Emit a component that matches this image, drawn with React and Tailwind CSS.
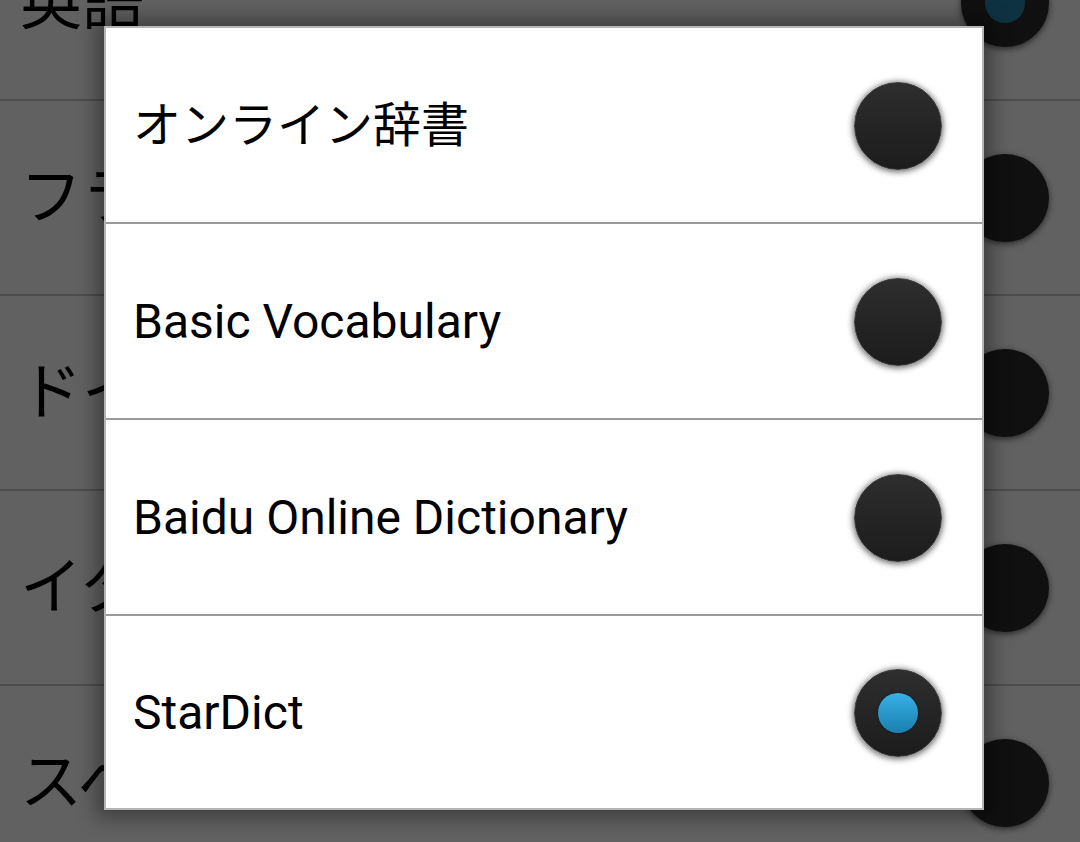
const languages = [
  { name: "英語", selected: true },
  { name: "フランス語" },
  { name: "ドイツ語" },
  { name: "イタリア語" },
  { name: "スペイン語" },
];

const dictionaries = [
  { name: "オンライン辞書" },
  { name: "Basic Vocabulary" },
  { name: "Baidu Online Dictionary" },
  { name: "StarDict", selected: true },
];

function Radio({ checked, dim }) {
  return (
    <div
      className={
        dim
          ? "w-[88px] h-[88px] rounded-full bg-[#101010] shadow-[0_2px_6px_rgba(0,0,0,0.6)] flex items-center justify-center"
          : "w-[88px] h-[88px] rounded-full bg-gradient-to-b from-[#2e2e2e] to-[#1c1c1c] border border-[#3c3c3c] shadow-[0_1px_6px_1px_rgba(0,0,0,0.6)] flex items-center justify-center"
      }
    >
      {checked && (
        <div
          className={
            dim
              ? "w-[40px] h-[40px] rounded-full bg-[#0f3242]"
              : "w-[40px] h-[40px] rounded-full bg-gradient-to-b from-[#38b1e6] to-[#1a7fb0] shadow-[0_0_2px_rgba(0,0,0,0.8)]"
          }
        />
      )}
    </div>
  );
}

export default function App() {
  return (
    <div className="relative w-[1080px] h-[842px] overflow-hidden bg-[#616161] font-['Roboto','Noto_Sans_CJK_JP',sans-serif]">
      {/* background list */}
      <div className="flex flex-col mt-[-94px]">
        {languages.map((l, i) => (
          <div
            key={i}
            className="h-[195px] flex items-center justify-between pl-[20px] pr-[31px] border-b-2 border-[#4c4c4c]"
          >
            <span className="text-[62px] text-black leading-none">{l.name}</span>
            <Radio checked={l.selected} dim />
          </div>
        ))}
      </div>

      {/* dialog */}
      <div className="absolute left-[104px] top-[26px] w-[880px] h-[784px] border-2 border-[#b5b5b5] bg-white shadow-[0_0_18px_8px_rgba(0,0,0,0.35)] flex flex-col">
        {dictionaries.map((d, i) => (
          <div
            key={i}
            className={
              i < dictionaries.length - 1
                ? "h-[196px] flex items-center justify-between pl-[27px] pr-[40px] pt-[2px] border-b-2 border-[#9a9a9a]"
                : "flex-1 flex items-center justify-between pl-[27px] pr-[40px] pt-[2px]"
            }
          >
            <span className="text-[48px] text-black leading-none">{d.name}</span>
            <Radio checked={d.selected} />
          </div>
        ))}
      </div>
    </div>
  );
}
